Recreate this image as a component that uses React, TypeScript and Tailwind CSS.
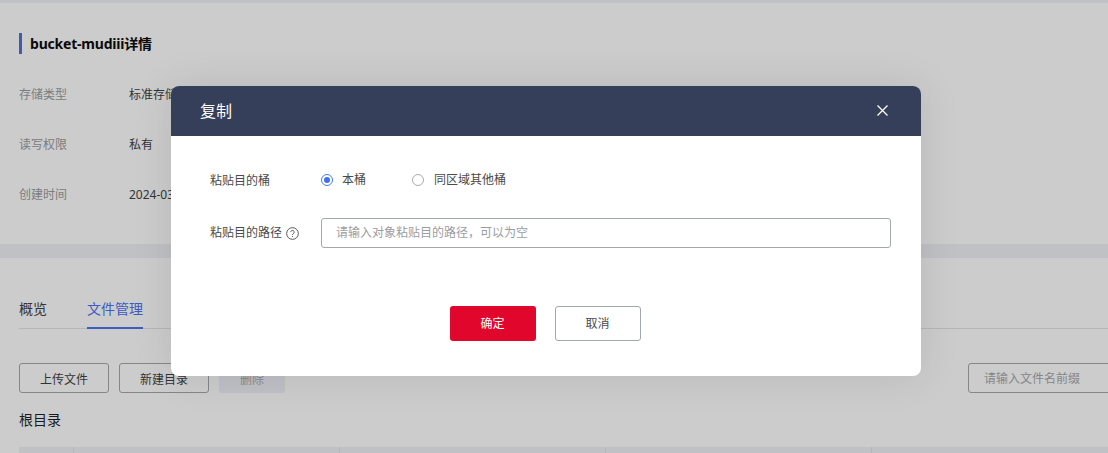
export default function App() {
  return (
    <div className="relative h-[453px] w-[1108px] overflow-hidden bg-[#c0c1c5] font-['Noto_Sans','Noto_Sans_CJK_SC',sans-serif]">
      <div className="mt-[3px] flex h-[241px] flex-col bg-[#cccccc] pl-[19px] pt-[30px]">
        <div className="flex h-[21px] items-center border-l-[3px] border-[#435aa8] pl-2 text-[14px] font-bold tracking-[-0.2px] text-[#0a0a0a]">
          bucket-mudiii详情
        </div>
        <div className="mt-[16px] flex flex-col text-[12px] text-[#333333]">
          {[
            ['存储类型', '标准存储'],
            ['读写权限', '私有'],
            ['创建时间', '2024-03-15'],
          ].map(([k, v]) => (
            <div key={k} className="flex h-[50px] items-center">
              <span className="w-[110px] text-[#7a7c80]">{k}</span>
              <span>{v}</span>
            </div>
          ))}
        </div>
      </div>
      <div className="mt-[14px] h-[195px] bg-[#cccccc] pl-[19px] pt-[34px]">
        <div className="flex h-[37px] gap-[40px] border-b border-[#b5b6ba] text-[14px]">
          <span className="pt-[7px] leading-[19px] text-[#333333]">概览</span>
          <span className="h-[37px] border-b-2 border-[#3c5bc4] pt-[7px] leading-[19px] text-[#3c5bc4]">文件管理</span>
        </div>
        <div className="mt-[34px] flex gap-[10px] text-[12px] text-[#333333]">
          <div className="flex h-[30px] w-[90px] shrink-0 items-center justify-center rounded-[3px] border border-[#85868a] pt-[4px]">上传文件</div>
          <div className="flex h-[30px] w-[90px] shrink-0 items-center justify-center rounded-[3px] border border-[#85868a] pt-[4px]">新建目录</div>
          <div className="flex h-[30px] w-[66px] shrink-0 items-center justify-center rounded-[3px] bg-[#bfc1c6] pt-[4px] text-[#8a8b8f]">删除</div>
          <div className="ml-[673px] flex h-[30px] w-[160px] shrink-0 items-center rounded-[3px] border border-[#85868a] pl-[15px] pt-[1px] text-[#85868a]">请输入文件名前缀</div>
        </div>
        <div className="mt-[17px] text-[14px] leading-[20px] text-[#1a1a1a]">根目录</div>
        <div className="mt-[17px] flex h-[20px] bg-[#c0c1c5]">
          <div className="w-[55px] border-r border-[#b5b6ba]" />
          <div className="w-[266px] border-r border-[#b5b6ba]" />
          <div className="w-[266px] border-r border-[#b5b6ba]" />
          <div className="w-[266px] border-r border-[#b5b6ba]" />
        </div>
      </div>

      <div className="absolute left-[171px] top-[86px] h-[290px] w-[750px] overflow-hidden rounded-[8px] bg-white shadow-[0_0_40px_rgba(0,0,0,0.1)]">
        <div className="flex h-[50px] items-center justify-between bg-[#363f5a] pb-[2px] pl-[29px] pr-[33px] text-[16px] text-white">
          <span className="pt-[2px]">复制</span>
          <svg width="11" height="11" viewBox="0 0 11 11" fill="none" stroke="white" strokeWidth="1.3"><path d="M0.5 0.5 10.5 10.5M10.5 0.5 0.5 10.5" /></svg>
        </div>
        <div className="pl-[39px] pr-[30px] pt-[34px] text-[12px] text-[#4a4a4a]">
          <div className="flex h-[20px] items-center">
            <span className="w-[111px] pt-[2px]">粘贴目的桶</span>
            <span className="flex h-[12px] w-[12px] items-center justify-center rounded-full border border-[#4a78f0]"><span className="h-[6px] w-[6px] rounded-full bg-[#3f6ff0]" /></span>
            <span className="ml-[9px]">本桶</span>
            <span className="ml-[46px] h-[12px] w-[12px] rounded-full border border-[#a8abb2]" />
            <span className="ml-[10px]">同区域其他桶</span>
          </div>
          <div className="mt-[28px] flex h-[30px] items-center">
            <span className="flex w-[111px] items-center gap-[4px]">
              粘贴目的路径
              <svg width="13" height="13" viewBox="0 0 12 12" fill="none" stroke="#555" strokeWidth="0.9"><circle cx="6" cy="6" r="5.4" /><path d="M4.4 4.7a1.6 1.6 0 1 1 2.4 1.4c-.5.3-.8.6-.8 1.2" /><path d="M6 8.4v.9" /></svg>
            </span>
            <div className="flex h-[30px] flex-1 items-center rounded-[3px] border border-[#a3a7b0] pl-[14px] text-[#9a9da3]">请输入对象粘贴目的路径，可以为空</div>
          </div>
          <div className="mt-[58px] flex justify-center gap-[19px] pr-[11px]">
            <div className="flex h-[35px] w-[86px] items-center justify-center rounded-[3px] bg-[#e1062c] text-white">确定</div>
            <div className="flex h-[35px] w-[86px] items-center justify-center rounded-[3px] border border-[#a3a7b0]">取消</div>
          </div>
        </div>
      </div>
    </div>
  );
}
